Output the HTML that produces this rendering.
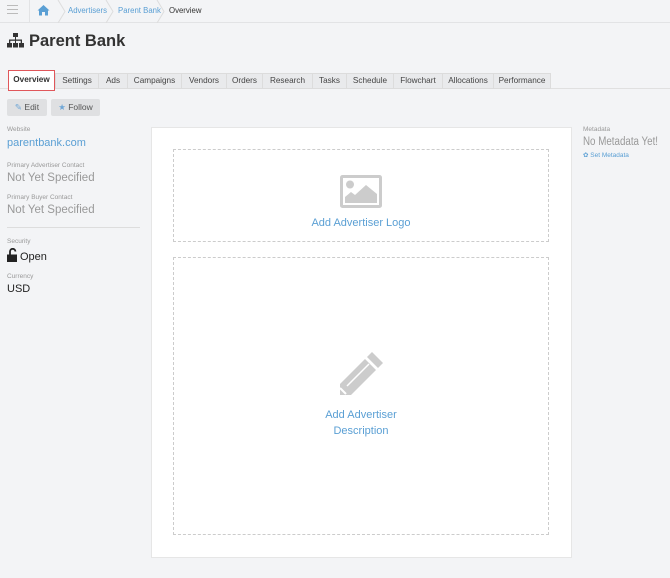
<!DOCTYPE html>
<html><head><meta charset="utf-8"><style>
*{box-sizing:border-box;margin:0;padding:0}
body{width:670px;height:578px;background:#f3f4f6;font-family:"Liberation Sans",sans-serif;position:relative;overflow:hidden;color:#333}
.abs{position:absolute;white-space:nowrap}
.top{left:0;top:0;width:670px;height:23px;border-bottom:1px solid #e2e3e5;background:#f3f4f6}
.bc{font-size:7.8px;top:6px}
.tab{position:absolute;top:73px;height:16px;border:1px solid #dcdcdc;background:#e9eaec;font-size:8.2px;color:#444;text-align:center;line-height:14px;white-space:nowrap}
.lbl{font-size:6.5px;color:#999}
.gray{font-size:11.5px;color:#999}
.btn{position:absolute;top:99px;height:17px;background:#dfe0e2;border-radius:2px;font-size:8.5px;color:#555;line-height:17px;text-align:center}
</style></head><body>
<div class="abs top"></div>
<div class="abs" style="left:7px;top:5px;width:11px">
<div style="height:1px;background:#bbb;margin-bottom:3px"></div><div style="height:1px;background:#bbb;margin-bottom:3px"></div><div style="height:1px;background:#bbb"></div></div>
<div class="abs" style="left:29px;top:0;width:1px;height:23px;background:#e2e3e5"></div>
<svg class="abs" style="left:37px;top:4px" width="13" height="12" viewBox="0 0 13 12"><path d="M6.5 1L0.5 6.5H2V11.5H5V8H8V11.5H11V6.5H12.5Z" fill="#5a9fd4"/></svg>
<svg class="abs" style="left:55px;top:0" width="120" height="23"><path d="M3 0L10 11.5L3 23M51 0L58 11.5L51 23M102 0L109 11.5L102 23" stroke="#ddd" fill="none"/></svg>
<div class="abs bc" style="left:68px;color:#5a9fd4">Advertisers</div>
<div class="abs bc" style="left:118px;color:#5a9fd4">Parent Bank</div>
<div class="abs bc" style="left:169px;color:#333">Overview</div>
<svg class="abs" style="left:7px;top:33px" width="17" height="15" viewBox="0 0 17 15"><g fill="#333"><rect x="6" y="0" width="5" height="4"/><rect x="8" y="4" width="1" height="3"/><rect x="2" y="6.5" width="13" height="1.3"/><rect x="2" y="6.5" width="1.3" height="4"/><rect x="13.7" y="6.5" width="1.3" height="4"/><rect x="8" y="6.5" width="1" height="4"/><rect x="0" y="10" width="5" height="4.5"/><rect x="6" y="10" width="5" height="4.5"/><rect x="12" y="10" width="5" height="4.5"/></g></svg>
<div class="abs" style="left:29px;top:32px;font-size:16.5px;font-weight:bold;color:#333">Parent Bank</div>
<div class="abs" style="left:0;top:88px;width:670px;height:1px;background:#e0e0e0"></div>
<div class="tab" style="left:55px;width:44px">Settings</div>
<div class="tab" style="left:98px;width:30px">Ads</div>
<div class="tab" style="left:127px;width:55px">Campaigns</div>
<div class="tab" style="left:181px;width:46px">Vendors</div>
<div class="tab" style="left:226px;width:37px">Orders</div>
<div class="tab" style="left:262px;width:51px">Research</div>
<div class="tab" style="left:312px;width:35px">Tasks</div>
<div class="tab" style="left:346px;width:48px">Schedule</div>
<div class="tab" style="left:393px;width:50px">Flowchart</div>
<div class="tab" style="left:442px;width:52px">Allocations</div>
<div class="tab" style="left:493px;width:58px">Performance</div>
<div class="abs" style="left:8px;top:70px;width:47px;height:21px;border:1.5px solid #e0575b;background:#fff;font-size:8.2px;font-weight:bold;color:#333;text-align:center;line-height:18px">Overview</div>
<div class="btn" style="left:7px;width:40px"><span style="color:#6fa6d6">✎</span> Edit</div>
<div class="btn" style="left:51px;width:49px"><span style="color:#6fa6d6">★</span> Follow</div>
<div class="abs lbl" style="left:7px;top:126px">Website</div>
<div class="abs" style="left:7px;top:137px;font-size:11px;color:#5a9fd4">parentbank.com</div>
<div class="abs lbl" style="left:7px;top:162px">Primary Advertiser Contact</div>
<div class="abs gray" style="left:7px;top:172px">Not Yet Specified</div>
<div class="abs lbl" style="left:7px;top:194px">Primary Buyer Contact</div>
<div class="abs gray" style="left:7px;top:204px">Not Yet Specified</div>
<div class="abs" style="left:7px;top:227px;width:133px;height:1px;background:#ddd"></div>
<div class="abs lbl" style="left:7px;top:238px">Security</div>
<svg class="abs" style="left:7px;top:248px" width="11" height="14" viewBox="0 0 11 14"><path d="M3 7V3.5A2.7 2.7 0 0 1 8.4 3.5" stroke="#222" stroke-width="1.8" fill="none"/><rect x="0" y="6.5" width="10" height="7.5" fill="#222"/></svg>
<div class="abs" style="left:20px;top:251px;font-size:11px;color:#222">Open</div>
<div class="abs lbl" style="left:7px;top:273px">Currency</div>
<div class="abs" style="left:7px;top:283px;font-size:11px;color:#222">USD</div>
<div class="abs" style="left:151px;top:127px;width:421px;height:431px;background:#fff;border:1px solid #e6e6e6"></div>
<div class="abs" style="left:173px;top:149px;width:376px;height:93px;border:1px dashed #ccc"></div>
<svg class="abs" style="left:340px;top:175px" width="42" height="33" viewBox="0 0 42 33"><rect x="1.5" y="1.5" width="39" height="30" rx="1" fill="none" stroke="#ccc" stroke-width="3"/><circle cx="10" cy="9.5" r="4" fill="#ccc"/><path d="M5 28V22L11 17L15 20L26 10L37 19V28Z" fill="#ccc"/></svg>
<div class="abs" style="left:173px;top:217px;width:376px;text-align:center;font-size:11px;color:#5a9fd4">Add Advertiser Logo</div>
<div class="abs" style="left:173px;top:257px;width:376px;height:278px;border:1px dashed #ccc"></div>
<svg class="abs" style="left:337px;top:350px" width="48" height="48" viewBox="0 0 48 48"><g fill="#ccc"><path d="M35 2L46 13L41 18L30 7Z" /><path d="M28 9L39 20L14 45H3V34Z"/></g><path d="M10 36L32 14" stroke="#fff" stroke-width="1.5"/><path d="M3 38L9 44" stroke="#fff" stroke-width="2"/></svg>
<div class="abs" style="left:173px;top:407px;width:376px;text-align:center;font-size:11px;line-height:16px;color:#5a9fd4">Add Advertiser<br>Description</div>
<div class="abs lbl" style="left:583px;top:126px">Metadata</div>
<div class="abs" style="left:583px;top:136px;font-size:11.5px;color:#999;transform:scaleX(0.85);transform-origin:left">No Metadata Yet!</div>
<div class="abs" style="left:583px;top:151px;font-size:6.5px;color:#5a9fd4">✿ Set Metadata</div>
</body></html>
